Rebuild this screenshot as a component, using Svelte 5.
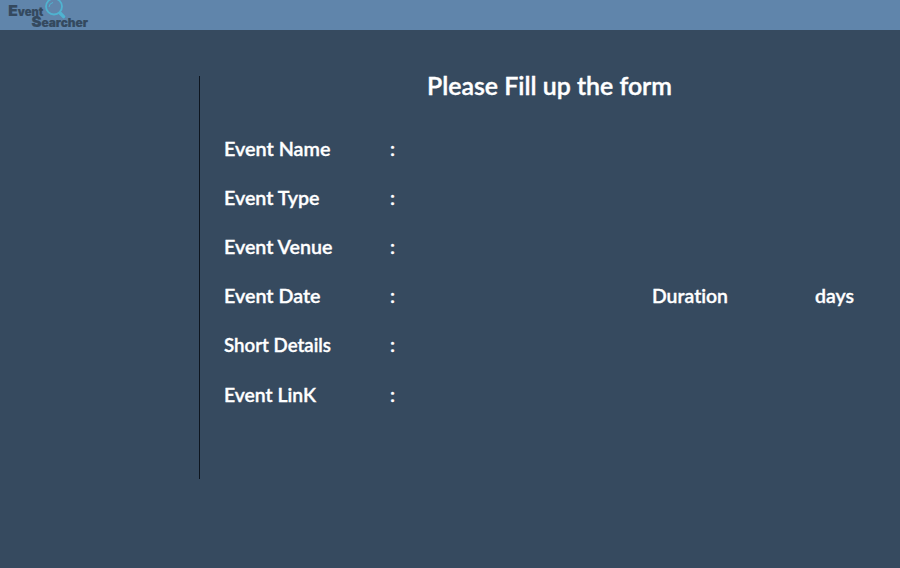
<script>
  const rows = [
    { label: 'Event Name', width: 106.5 },
    { label: 'Event Type', width: 95.5 },
    { label: 'Event Venue', width: 108.5 },
    { label: 'Event Date', width: 96.5, duration: true },
    { label: 'Short Details', width: 107 },
    { label: 'Event LinK', width: 92 }
  ];
</script>

{#snippet word(text, width)}
  <svg class="word" {width} height="26" role="img" aria-label={text}>
    <text x="0" y="19" textLength={width} lengthAdjust="spacingAndGlyphs">{text}</text>
  </svg>
{/snippet}

<div class="page">
  <header>
    <svg class="logo" width="100" height="30">
      <g fill="none" stroke="#4fb3d0">
        <circle cx="54" cy="6.5" r="8" stroke-width="1.8" />
        <path d="M49 7a5 5 0 0 1 4-4.5" stroke-width="1" />
        <path d="M60 13l3.6 3.6" stroke-width="3.4" stroke-linecap="round" />
      </g>
      <g class="brand">
        <text class="cap" x="8.3" y="16" textLength="9.5" lengthAdjust="spacingAndGlyphs">E</text>
        <text class="rest" x="17.8" y="16" textLength="25.5" lengthAdjust="spacingAndGlyphs">vent</text>
        <text class="cap" x="31.6" y="27" textLength="10" lengthAdjust="spacingAndGlyphs">S</text>
        <text class="rest" x="41.4" y="27" textLength="46.6" lengthAdjust="spacingAndGlyphs">earcher</text>
      </g>
    </svg>
  </header>
  <main>
    <aside></aside>
    <section>
      <svg class="title" width="245" height="34">
        <text x="0" y="24.5" textLength="245" lengthAdjust="spacingAndGlyphs">Please Fill up the form</text>
      </svg>
      <div class="rows">
        {#each rows as row}
          <div class="row">
            <div class="label">{@render word(row.label, row.width)}</div>
            <svg class="word" width="6" height="26"><text x="0" y="19">:</text></svg>
            {#if row.duration}
              <div class="duration">
                {@render word('Duration', 76)}
                {@render word('days', 39)}
              </div>
            {/if}
          </div>
        {/each}
      </div>
    </section>
  </main>
</div>

<style>
  :global(body) {
    margin: 0;
    background: #364a5f;
  }
  .page {
    width: 900px;
    height: 568px;
    overflow: hidden;
    background: #364a5f;
    color: #fff;
    font-family: Lato, "Liberation Sans", sans-serif;
    font-variant-ligatures: none;
  }
  svg {
    display: block;
    overflow: visible;
  }
  header {
    height: 30px;
    background: #6085ab;
    overflow: hidden;
  }
  .brand {
    fill: #34495e;
    stroke: #34495e;
    stroke-width: 0.2px;
    font-family: Inter, sans-serif;
    font-weight: 900;
  }
  .cap {
    font-size: 15px;
  }
  .rest {
    font-size: 11.5px;
  }
  main {
    display: flex;
    padding-top: 46px;
  }
  aside {
    box-sizing: border-box;
    width: 200px;
    height: 403px;
    border-right: 1px solid #0d151f;
  }
  section {
    flex: 1;
    padding-left: 24px;
  }
  .title {
    margin: -6px 0 0 203px;
    fill: #fff;
    stroke: #fff;
    stroke-width: 0.4px;
    font-size: 25px;
    font-weight: 600;
  }
  .rows {
    padding-top: 33px;
  }
  .row {
    display: flex;
    height: 49px;
  }
  .row:last-child {
    margin-top: 1px;
  }
  .word {
    fill: #fff;
    stroke: #fff;
    stroke-width: 0.35px;
    font-size: 20px;
    font-weight: 600;
  }
  .label {
    width: 166px;
  }
  .duration {
    display: flex;
    gap: 87px;
    margin-left: 256px;
  }
</style>
